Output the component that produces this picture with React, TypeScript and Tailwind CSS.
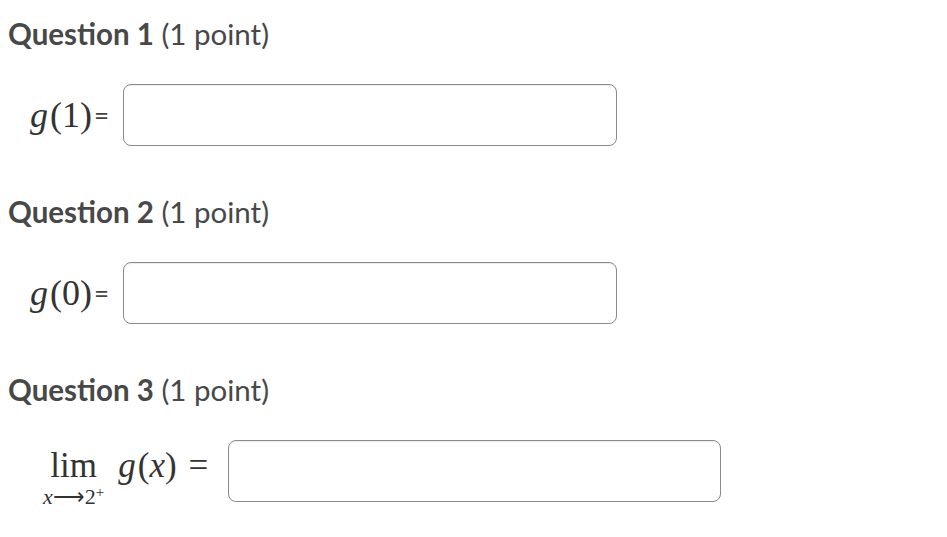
import React from "react";

const serif = { fontFamily: "'Liberation Serif', 'Times New Roman', serif" };

function Heading({ n }: { n: number }) {
  return (
    <h2 className="text-[29.5px] leading-[32px] text-[#484848]" style={{ fontFamily: "Lato, sans-serif" }}>
      <span className="font-bold">Question {n}</span> (1 point)
    </h2>
  );
}

function AnswerBox({ width }: { width: string }) {
  return (
    <div
      className={`${width} h-[62px] rounded-[8px] border border-[#8a8a8a] bg-white shadow-[inset_0_1px_1px_rgba(0,0,0,0.075)]`}
    />
  );
}

function SimpleRow({ arg }: { arg: string }) {
  return (
    <div className="flex items-center">
      <div className="w-[115px] pl-[22px] flex items-center text-[#333]">
        <span className="text-[36px] leading-[40px]" style={serif}>
          <i className="mr-[2px]">g</i>({arg})
        </span>
        <span className="text-[26px] ml-[2px] text-[#444]" style={{ fontFamily: "Lato, sans-serif" }}>
          =
        </span>
      </div>
      <AnswerBox width="w-[494px]" />
    </div>
  );
}

function LimitRow() {
  return (
    <div className="flex items-start">
      <div className="w-[220px] pl-[35px] mt-[9px] flex items-start text-[#333]" style={serif}>
        <div className="flex flex-col items-center">
          <span className="text-[35px] leading-[34px]">lim</span>
          <span className="text-[22px] leading-[22px] mt-[3px]">
            <i>x</i>⟶2<sup className="text-[15px]">+</sup>
          </span>
        </div>
        <span className="text-[35px] leading-[34px] ml-[14px]">
          <i className="mr-[2px]">g</i>(<i>x</i>)
        </span>
        <span className="text-[35px] leading-[34px] ml-[12px]">=</span>
      </div>
      <AnswerBox width="w-[493px]" />
    </div>
  );
}

export default function App() {
  return (
    <div className="w-[947px] h-[537px] bg-white pl-[8px] pt-[18px]">
      <Heading n={1} />
      <div className="mt-[34px]">
        <SimpleRow arg="1" />
      </div>
      <div className="mt-[50px]">
        <Heading n={2} />
      </div>
      <div className="mt-[34px]">
        <SimpleRow arg="0" />
      </div>
      <div className="mt-[50px]">
        <Heading n={3} />
      </div>
      <div className="mt-[34px]">
        <LimitRow />
      </div>
    </div>
  );
}
